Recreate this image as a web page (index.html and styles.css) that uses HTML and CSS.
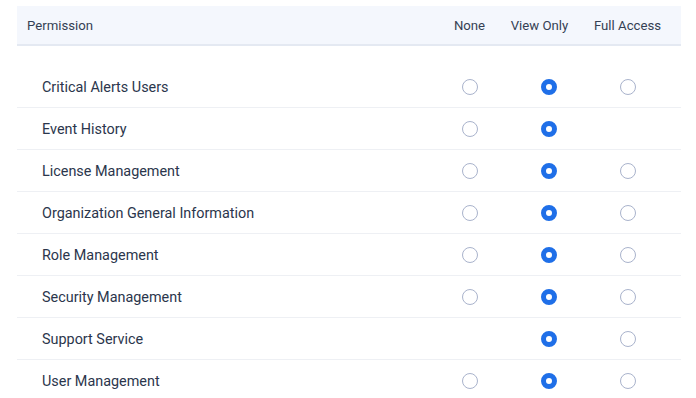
FILE: index.html
```html
<!DOCTYPE html>
<html lang="en">
<head>
    <meta charset="UTF-8">
    <title>Permissions</title>
    <link rel="stylesheet" href="styles.css">
</head>
<body>

<div class="perm-table">
    <div class="perm-head">
        <div class="col-name">Permission</div>
        <div class="col-opt">None</div>
        <div class="col-opt col-view">View Only</div>
        <div class="col-opt">Full Access</div>
    </div>

    <div class="perm-body">
        <div class="perm-row">
            <div class="row-name">Critical Alerts Users</div>
            <div class="cell"><span class="radio"></span></div>
            <div class="cell"><span class="radio checked"></span></div>
            <div class="cell"><span class="radio"></span></div>
        </div>
        <div class="perm-row">
            <div class="row-name">Event History</div>
            <div class="cell"><span class="radio"></span></div>
            <div class="cell"><span class="radio checked"></span></div>
            <div class="cell"></div>
        </div>
        <div class="perm-row">
            <div class="row-name">License Management</div>
            <div class="cell"><span class="radio"></span></div>
            <div class="cell"><span class="radio checked"></span></div>
            <div class="cell"><span class="radio"></span></div>
        </div>
        <div class="perm-row">
            <div class="row-name">Organization General Information</div>
            <div class="cell"><span class="radio"></span></div>
            <div class="cell"><span class="radio checked"></span></div>
            <div class="cell"><span class="radio"></span></div>
        </div>
        <div class="perm-row">
            <div class="row-name">Role Management</div>
            <div class="cell"><span class="radio"></span></div>
            <div class="cell"><span class="radio checked"></span></div>
            <div class="cell"><span class="radio"></span></div>
        </div>
        <div class="perm-row">
            <div class="row-name">Security Management</div>
            <div class="cell"><span class="radio"></span></div>
            <div class="cell"><span class="radio checked"></span></div>
            <div class="cell"><span class="radio"></span></div>
        </div>
        <div class="perm-row">
            <div class="row-name">Support Service</div>
            <div class="cell"></div>
            <div class="cell"><span class="radio checked"></span></div>
            <div class="cell"><span class="radio"></span></div>
        </div>
        <div class="perm-row">
            <div class="row-name">User Management</div>
            <div class="cell"><span class="radio"></span></div>
            <div class="cell"><span class="radio checked"></span></div>
            <div class="cell"><span class="radio"></span></div>
        </div>
    </div>
</div>

</body>
</html>
```

FILE: styles.css
```css
body {
    margin: 0;
    background-color: #fff;
    font-family: Roboto, "Liberation Sans", Arial, sans-serif;
    color: #2b364c;
}
.perm-table {
    margin: 6px 15px 0 17px;
}
.perm-head, .perm-row {
    display: grid;
    grid-template-columns: 1fr 79px 79px 79px;
    padding-right: 14px;
    align-items: center;
}
.perm-head {
    height: 38px;
    background-color: #f4f7fd;
    border-bottom: 2px solid #e4e9f2;
    font-size: 13.2px;
    color: #353f54;
}
.col-name {
    padding-left: 10px;
}
.col-opt {
    text-align: center;
    white-space: nowrap;
}
.col-view {
    padding-right: 18px;
}
.perm-body {
    padding-top: 20px;
}
.perm-row {
    height: 41px;
    border-bottom: 1px solid #eef0f4;
    font-size: 14.4px;
}
.perm-row:last-child {
    border-bottom: none;
}
.row-name {
    padding-left: 25px;
    padding-top: 2px;
}
.cell {
    display: flex;
    justify-content: center;
    align-items: center;
}
.radio {
    width: 14px;
    height: 14px;
    border: 1px solid #a9b3cc;
    border-radius: 50%;
    background-color: #fff;
}
.radio.checked {
    width: 6px;
    height: 6px;
    border: 5px solid #1f6fe8;
}
```
